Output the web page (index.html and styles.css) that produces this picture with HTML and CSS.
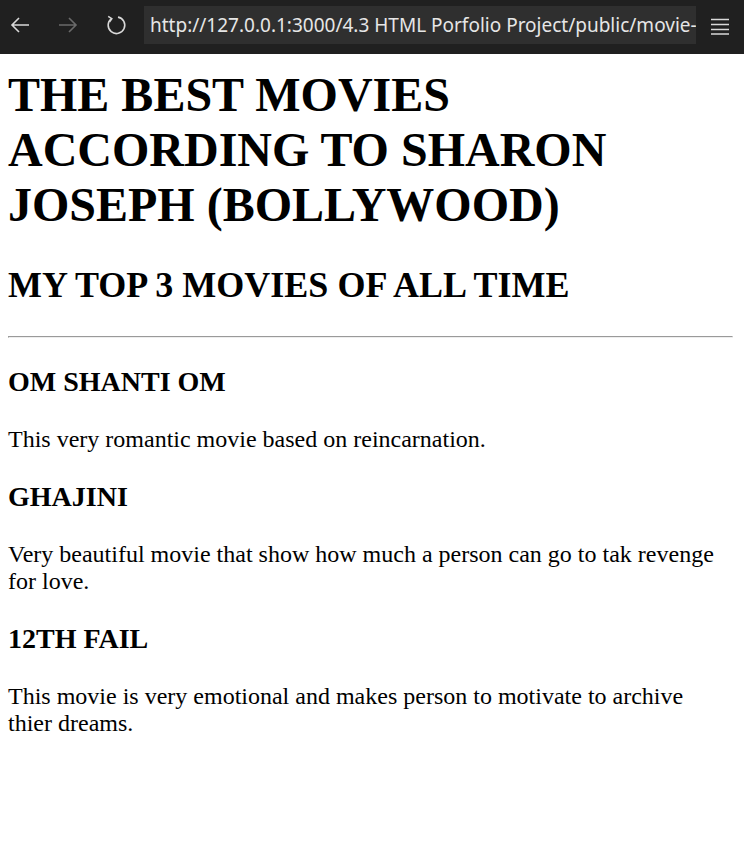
FILE: index.html
```html
<!DOCTYPE html>
<html lang="en">
<head>
<meta charset="utf-8">
<title>Movies</title>
<link rel="stylesheet" href="styles.css">
</head>
<body>
<div class="chrome">
  <span class="nav-btn">
    <svg width="22" height="22" viewBox="0 0 22 22"><path d="M20 11H3M10 4L3 11L10 18" fill="none" stroke="#d8d8d8" stroke-width="1.6"/></svg>
  </span>
  <span class="nav-btn">
    <svg width="22" height="22" viewBox="0 0 22 22"><path d="M2 11H19M12 4L19 11L12 18" fill="none" stroke="#6a6a6a" stroke-width="1.6"/></svg>
  </span>
  <span class="nav-btn">
    <svg width="22" height="22" viewBox="0 0 22 22"><path d="M6.5 4.6A8.3 8.3 0 1 0 13 3.1" fill="none" stroke="#d8d8d8" stroke-width="1.6"/><path d="M3.2 2.3L6.8 4.6L4.4 8" fill="none" stroke="#d8d8d8" stroke-width="1.6"/></svg>
  </span>
  <div class="url">http://127.0.0.1:3000/4.3 HTML Porfolio Project/public/movie-ranking.html</div>
  <span class="menu-btn">
    <svg width="20" height="20" viewBox="0 0 20 20"><path d="M1 4.5H19M1 9.5H19M1 14.5H19M1 19H19" fill="none" stroke="#d8d8d8" stroke-width="1.6"/></svg>
  </span>
</div>
<main class="page">
  <h1>THE BEST MOVIES ACCORDING TO SHARON JOSEPH (BOLLYWOOD)</h1>
  <h2>MY TOP 3 MOVIES OF ALL TIME</h2>
  <hr>
  <h3>OM SHANTI OM</h3>
  <p>This very romantic movie based on reincarnation.</p>
  <h3>GHAJINI</h3>
  <p>Very beautiful movie that show how much a person can go to tak revenge for love.</p>
  <h3>12TH FAIL</h3>
  <p>This movie is very emotional and makes person to motivate to archive thier dreams.</p>
</main>
</body>
</html>
```
FILE: styles.css
```css
html, body {
  margin: 0;
  padding: 0;
  background: #ffffff;
}

body {
  font-family: "Liberation Serif", "Times New Roman", serif;
  font-size: 24px;
  color: #000;
}

.chrome {
  height: 54px;
  background: #202020;
  display: flex;
  align-items: flex-start;
  box-sizing: border-box;
  padding-top: 6px;
}

.nav-btn {
  width: 48px;
  height: 38px;
  display: flex;
  align-items: center;
  justify-content: center;
  flex: none;
}

.nav-btn:first-child {
  margin-left: -4px;
}

.url {
  flex: none;
  width: 552px;
  height: 38px;
  box-sizing: border-box;
  background: #2f2f2f;
  color: #e6e6e6;
  font-family: "Noto Sans", "Open Sans", sans-serif;
  font-size: 19px;
  line-height: 38px;
  padding-left: 6px;
  white-space: nowrap;
  overflow: hidden;
  margin-left: 4px;
}

.menu-btn {
  flex: none;
  width: 48px;
  height: 38px;
  display: flex;
  align-items: center;
  justify-content: center;
}

.page {
  padding: 0 16px 0 8px;
}

h1 {
  font-size: 48px;
  margin: 13px 0 32px;
}

h2 {
  font-size: 36px;
  margin: 30px 0;
}

hr {
  margin: 12px -5px 12px 0;
}

h3 {
  font-size: 28px;
  margin: 28px 0;
}

p {
  margin: 24px 0;
}
```
